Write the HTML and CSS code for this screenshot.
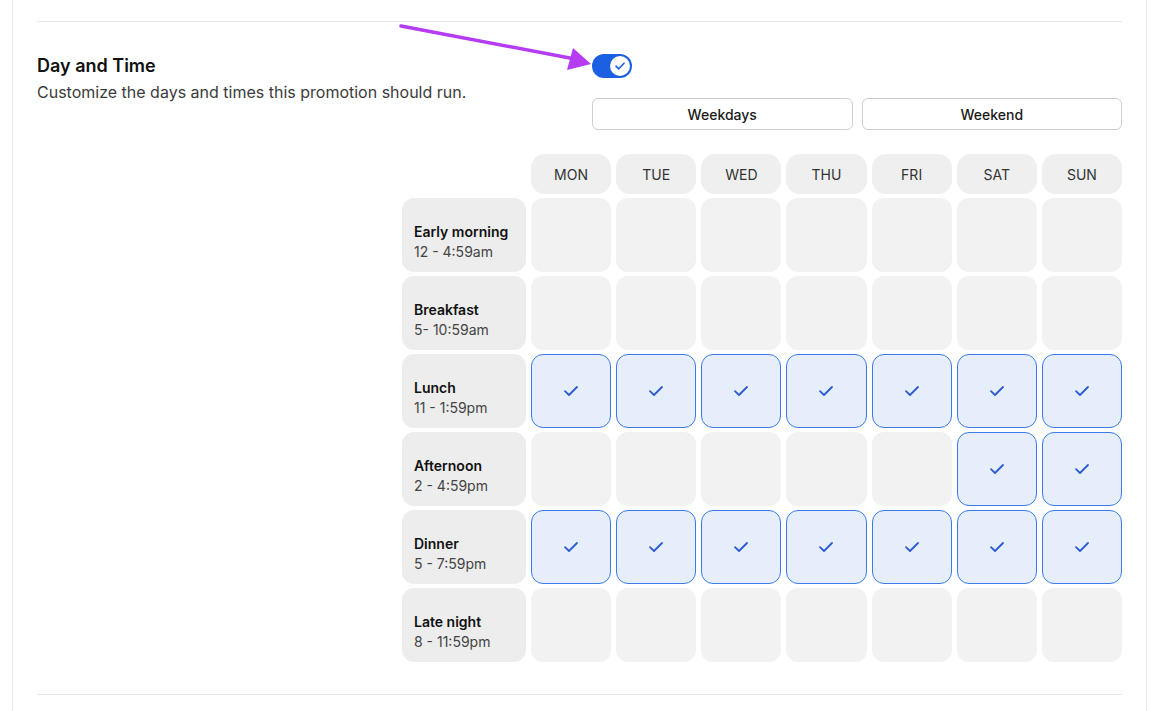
FILE: index.html
```html
<!DOCTYPE html>
<html lang="en">
<head>
    <meta charset="UTF-8">
    <meta name="viewport" content="width=device-width, initial-scale=1.0">
    <title>Day and Time</title>
    <link rel="stylesheet" href="styles.css">
</head>
<body>
    <div class="card">
        <div class="divider"></div>

        <div class="section-head">
            <div class="intro">
                <h2>Day and Time</h2>
                <p>Customize the days and times this promotion should run.</p>
            </div>
            <div class="controls">
                <div class="toggle">
                    <span class="knob">
                        <svg width="10" height="8" viewBox="0 0 10 8"><path d="M1 4.2 L3.8 6.8 L9 1.2" fill="none" stroke="#1b5fe3" stroke-width="1.6" stroke-linecap="round" stroke-linejoin="round"/></svg>
                    </span>
                </div>
                <div class="presets">
                    <button class="preset">Weekdays</button>
                    <button class="preset">Weekend</button>
                </div>
            </div>
        </div>

        <div class="schedule" id="schedule">
            <div></div>
            <div class="day">MON</div>
            <div class="day">TUE</div>
            <div class="day">WED</div>
            <div class="day">THU</div>
            <div class="day">FRI</div>
            <div class="day">SAT</div>
            <div class="day">SUN</div>
        </div>

        <div class="divider bottom"></div>

        <svg class="arrow" width="220" height="60" viewBox="0 0 220 60">
            <line x1="4" y1="6" x2="178" y2="39" stroke="#b53cf2" stroke-width="3.5" stroke-linecap="round"/>
            <polygon points="194,44 170,50 176,28" fill="#b53cf2"/>
        </svg>
    </div>

    <script>
        const slots = [
            { name: 'Early morning', time: '12 - 4:59am', days: [] },
            { name: 'Breakfast', time: '5- 10:59am', days: [] },
            { name: 'Lunch', time: '11 - 1:59pm', days: [0, 1, 2, 3, 4, 5, 6] },
            { name: 'Afternoon', time: '2 - 4:59pm', days: [5, 6] },
            { name: 'Dinner', time: '5 - 7:59pm', days: [0, 1, 2, 3, 4, 5, 6] },
            { name: 'Late night', time: '8 - 11:59pm', days: [] }
        ];

        const check = '<svg width="16" height="12" viewBox="0 0 16 12"><path d="M2 6.2 L6 10 L14 2" fill="none" stroke="#2b5bd4" stroke-width="1.8" stroke-linecap="round" stroke-linejoin="round"/></svg>';
        const grid = document.getElementById('schedule');

        slots.forEach(slot => {
            const label = document.createElement('div');
            label.className = 'slot';
            label.innerHTML = `<strong>${slot.name}</strong><span>${slot.time}</span>`;
            grid.appendChild(label);

            for (let d = 0; d < 7; d++) {
                const cell = document.createElement('div');
                cell.className = 'cell';
                if (slot.days.includes(d)) {
                    cell.classList.add('on');
                    cell.innerHTML = check;
                }
                grid.appendChild(cell);
            }
        });
    </script>
</body>
</html>
```

FILE: styles.css
```css
body {
    margin: 0;
    font-family: Inter, "Noto Sans", Arial, sans-serif;
    background-color: #ffffff;
    color: #111;
}
.card {
    position: relative;
    margin-left: 12px;
    width: 1135px;
    height: 711px;
    border-left: 1px solid #e8e8e8;
    border-right: 1px solid #e8e8e8;
    padding: 21px 24px 0 24px;
    box-sizing: border-box;
}
.divider {
    height: 1px;
    background-color: #e8e8e8;
}
.divider.bottom {
    margin-top: 32px;
}
.section-head {
    display: flex;
    justify-content: space-between;
    padding-top: 32px;
}
.intro h2 {
    margin: 0;
    font-size: 18px;
    line-height: 24px;
    font-weight: 600;
    color: #111;
}
.intro p {
    margin: 3px 0 0 0;
    font-size: 16px;
    line-height: 22px;
    color: #3b3b3b;
}
.controls {
    width: 530px;
}
.toggle {
    width: 40px;
    height: 24px;
    border-radius: 12px;
    background-color: #1b5fe3;
    display: flex;
    align-items: center;
    justify-content: flex-end;
    padding: 0 2px;
    box-sizing: border-box;
}
.knob {
    width: 20px;
    height: 20px;
    border-radius: 50%;
    background-color: white;
    display: flex;
    align-items: center;
    justify-content: center;
}
.presets {
    display: flex;
    gap: 9px;
    margin-top: 20px;
}
.preset {
    flex: 1;
    height: 32px;
    background-color: white;
    border: 1px solid #cfcfcf;
    border-radius: 6px;
    font-family: inherit;
    font-size: 14px;
    font-weight: 500;
    color: #1a1a1a;
    cursor: pointer;
}
.schedule {
    display: grid;
    grid-template-columns: 124px repeat(7, 1fr);
    grid-template-rows: 40px repeat(6, 74px);
    gap: 4px 5px;
    width: 720px;
    margin: 24px 0 0 auto;
}
.day {
    background-color: #efefef;
    border-radius: 14px;
    display: flex;
    align-items: center;
    justify-content: center;
    font-size: 14px;
    color: #333;
}
.slot {
    background-color: #ededed;
    border-radius: 12px;
    padding: 14px 0 0 12px;
    display: flex;
    flex-direction: column;
    justify-content: center;
    font-size: 14px;
    line-height: 20px;
}
.slot strong {
    font-weight: 600;
    color: #111;
}
.slot span {
    color: #444;
}
.cell {
    background-color: #f2f2f2;
    border-radius: 12px;
    border: 1px solid transparent;
    display: flex;
    align-items: center;
    justify-content: center;
}
.cell.on {
    background-color: #e6eefb;
    border-color: #3a7be8;
}
.arrow {
    position: absolute;
    left: 384px;
    top: 20px;
}
```
